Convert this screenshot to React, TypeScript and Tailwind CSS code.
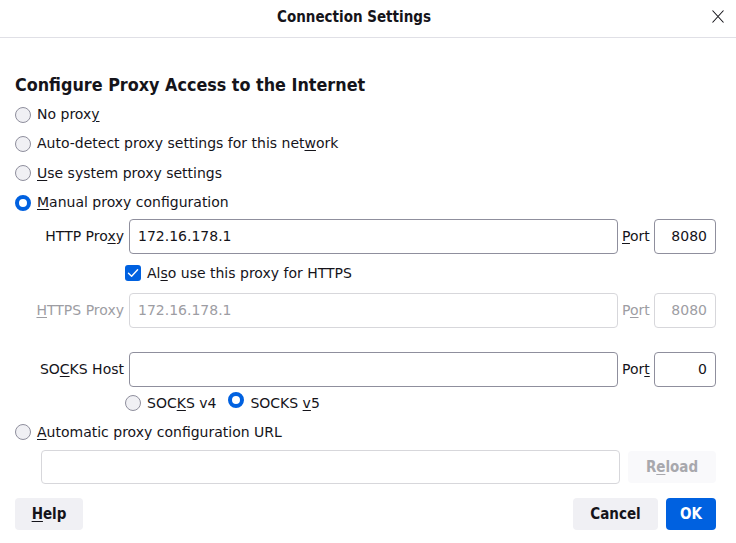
import React from "react";

const body = { fontFamily: '"DejaVu Sans", "Liberation Sans", sans-serif' };
const cond = { fontFamily: '"DejaVu Sans Condensed", "DejaVu Sans", sans-serif', fontStretch: "condensed" as const };

function Radio({ checked }: { checked?: boolean }) {
  return checked ? (
    <span className="inline-block w-[16px] h-[16px] rounded-full border-[4px] border-[#0061e0] bg-white shrink-0" />
  ) : (
    <span className="inline-block w-[16px] h-[16px] rounded-full border border-[#8f8f9d] bg-[#f0f0f4] shrink-0" />
  );
}

function Check() {
  return (
    <span className="inline-flex items-center justify-center w-[16px] h-[16px] rounded-[3px] bg-[#0061e0] shrink-0">
      <svg width="12" height="12" viewBox="0 0 12 12" fill="none">
        <path d="M1.5 6.2 L4.6 9.2 L10.6 2.8" stroke="white" strokeWidth="1.4" strokeLinecap="round" strokeLinejoin="round" />
      </svg>
    </span>
  );
}

function U({ children }: { children: React.ReactNode }) {
  return <span className="underline underline-offset-[2px] decoration-[1px]">{children}</span>;
}

export default function App() {
  return (
    <div className="w-[736px] h-[543px] bg-white text-[#15141a] text-[14px] overflow-hidden relative" style={body}>
      {/* Title bar */}
      <div className="h-[38px] border-b border-[#e0e0e6] flex items-center relative">
        <div className="w-[708px] flex justify-center">
          <span className="font-bold text-[15px] pb-[2px]" style={cond}>Connection Settings</span>
        </div>
        <svg className="absolute left-[712px] top-[10px]" width="12" height="13" viewBox="0 0 12 13">
          <path d="M0.5 0.5 L11.5 12.5 M11.5 0.5 L0.5 12.5" stroke="#15141a" strokeWidth="1.1" />
        </svg>
      </div>

      <div className="pl-[15px] pr-[20px]">
        <div className="mt-[34px] h-[24px] leading-[24px] font-bold text-[17.8px] translate-y-[1px]" style={cond}>
          Configure Proxy Access to the Internet
        </div>

        <div className="mt-[4px]">
          <div className="h-[29px] flex items-center gap-[6px]"><Radio /><span>No prox<U>y</U></span></div>
          <div className="h-[29px] flex items-center gap-[6px]"><Radio /><span>Auto-detect proxy settings for this net<U>w</U>ork</span></div>
          <div className="h-[30px] flex items-center gap-[6px]"><Radio /><span><U>U</U>se system proxy settings</span></div>
          <div className="h-[29px] flex items-center gap-[6px]"><Radio checked /><span><U>M</U>anual proxy configuration</span></div>
        </div>

        {/* HTTP Proxy */}
        <div className="mt-[2px] h-[35px] flex items-center">
          <div className="w-[114px] text-right pr-[5px] shrink-0">HTTP Pro<U>x</U>y</div>
          <div className="w-[489px] h-[35px] border border-[#8f8f9d] rounded-[4px] flex items-center px-[8px]">172.16.178.1</div>
          <div className="w-[36px] pl-[4px]"><U>P</U>ort</div>
          <div className="w-[62px] h-[35px] border border-[#8f8f9d] rounded-[4px] flex items-center justify-end px-[8px]">8080</div>
        </div>

        <div className="mt-[2px] h-[34px] flex items-center gap-[6px] pl-[110px]">
          <Check />
          <span>Al<U>s</U>o use this proxy for HTTPS</span>
        </div>

        {/* HTTPS Proxy */}
        <div className="mt-[3px] h-[35px] flex items-center text-[#9d9da3]">
          <div className="w-[114px] text-right pr-[5px] shrink-0"><U>H</U>TTPS Proxy</div>
          <div className="w-[489px] h-[35px] border border-[#d7d7db] rounded-[4px] flex items-center px-[8px]">172.16.178.1</div>
          <div className="w-[36px] pl-[4px]">P<U>o</U>rt</div>
          <div className="w-[62px] h-[35px] border border-[#d7d7db] rounded-[4px] flex items-center justify-end px-[8px]">8080</div>
        </div>

        {/* SOCKS */}
        <div className="mt-[24px] h-[35px] flex items-center">
          <div className="w-[114px] text-right pr-[5px] shrink-0">SO<U>C</U>KS Host</div>
          <div className="w-[489px] h-[35px] border border-[#8f8f9d] rounded-[4px]" />
          <div className="w-[36px] pl-[4px]">Por<U>t</U></div>
          <div className="w-[62px] h-[35px] border border-[#8f8f9d] rounded-[4px] flex items-center justify-end px-[8px]">0</div>
        </div>

        <div className="mt-[1px] h-[30px] flex items-center pl-[110px]">
          <Radio /><span className="ml-[6px]">SOC<U>K</U>S v4</span>
          <span className="ml-[12px]"><Radio checked /></span><span className="ml-[6px]">SOCKS <U>v</U>5</span>
        </div>

        <div className="h-[28px] flex items-center gap-[6px]">
          <Radio /><span><U>A</U>utomatic proxy configuration URL</span>
        </div>

        <div className="mt-[4px] flex items-center pl-[26px]">
          <div className="w-[579px] h-[34px] border border-[#d7d7db] rounded-[4px]" />
          <div className="ml-[8px] w-[88px] h-[32px] rounded-[4px] bg-[#f9f9fb] flex items-center justify-center font-bold text-[15px] text-[#a8a8ad]" style={cond}>
            R<U>e</U>load
          </div>
        </div>

        {/* Footer */}
        <div className="mt-[14px] flex items-center">
          <div className="w-[68px] h-[32px] rounded-[4px] bg-[#f0f0f4] flex items-center justify-center font-bold text-[15px]" style={cond}>
            <U>H</U>elp
          </div>
          <div className="flex-1" />
          <div className="w-[85px] h-[32px] rounded-[4px] bg-[#f0f0f4] flex items-center justify-center font-bold text-[15px]" style={cond}>
            Cancel
          </div>
          <div className="ml-[8px] w-[50px] h-[32px] rounded-[4px] bg-[#0061e0] text-white flex items-center justify-center font-bold text-[15px]" style={cond}>
            OK
          </div>
        </div>
      </div>
    </div>
  );
}
